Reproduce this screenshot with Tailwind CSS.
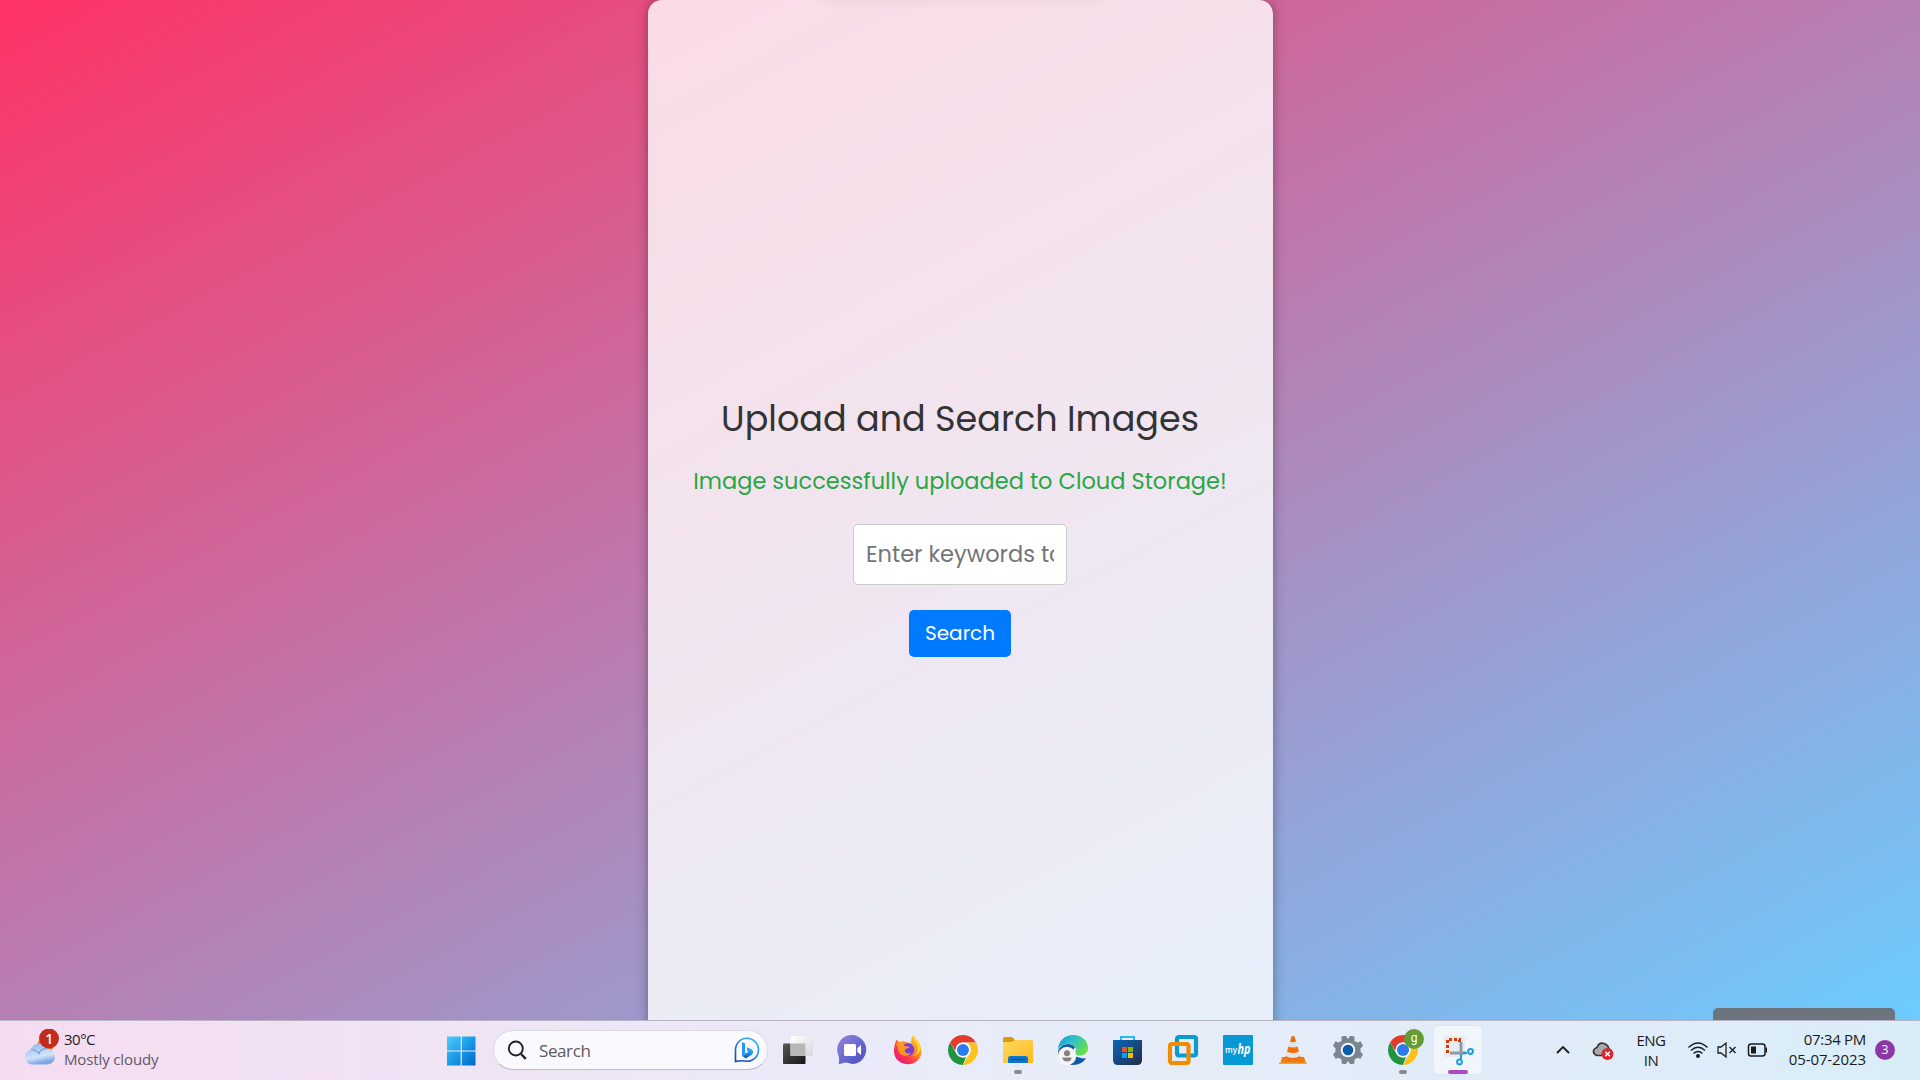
<!DOCTYPE html>
<html lang="en">
<head>
<meta charset="utf-8">
<title>Upload and Search Images</title>
<script src="https://cdn.jsdelivr.net/npm/@tailwindcss/browser@4"></script>
</head>
<body class="flex h-[1080px] w-[1920px] flex-col overflow-hidden font-['Poppins','Inter',sans-serif]">
<main class="relative flex h-[1020px] shrink-0 justify-center overflow-hidden bg-[linear-gradient(to_bottom_right,#ff3366,#6dcbff)]">
  <section class="ml-[1px] flex h-[1100px] w-[625px] flex-col items-center rounded-[14px] bg-white/80 pt-[392px] pr-[1px] shadow-[0_0_12px_rgba(0,0,0,0.35)] [font-feature-settings:'cv11']">
    <h1 class="whitespace-nowrap text-[35px] leading-[54px] text-[#333]">Upload and Search Images</h1>
    <p class="mt-[17px] whitespace-nowrap text-[22.5px] leading-[36px] text-[#28a745]">Image successfully uploaded to Cloud Storage!</p>
    <input type="text" placeholder="Enter keywords to search" class="mt-[25px] h-[61px] w-[214px] rounded-[5px] border border-[#ccc] bg-white px-[12px] pb-[2px] text-[22.5px] placeholder:text-[#757575]">
    <button class="mt-[25px] h-[47px] w-[102px] rounded-[5px] bg-[#007bff] pb-[2px] text-[20px] text-white">Search</button>
  </section>
  <div class="absolute -top-[10px] left-[820px] h-[10px] w-[280px] shadow-[0_0_12px_rgba(0,0,0,0.07)]"></div>
  <div class="absolute left-[1713px] top-[1008px] h-[30px] w-[182px] rounded-[5px] bg-[#6c757d]"></div>
</main>
<footer class="flex h-[60px] shrink-0 items-center border-t border-[#b9b5c5] bg-linear-to-r from-[#f5dcf1] via-[#e9ecf9] to-[#d9edf8] font-['Segoe_UI','Open_Sans',sans-serif] text-[15px]">
  <div class="ml-[24px] flex w-[422px] items-center pb-[4px]">
    <svg class="h-[40px] w-[40px]" viewBox="0 0 40 40"><defs><linearGradient id="cl" x1="0" y1="0" x2="0.3" y2="1"><stop stop-color="#8eb3ee"/><stop offset=".7" stop-color="#d3e4fa"/><stop offset="1" stop-color="#7ea5e6"/></linearGradient></defs><circle cx="21" cy="17" r="8" fill="#f47b20"/><path d="M8 35.500a7.500 7.500 0 0 1-1.500-14.800A9 9 0 0 1 23 19.500a8 8 0 0 1 0 16z" fill="url(#cl)"/><path d="M7 20.500c4 0 6 2 8 4 1-3 4-5 8-5" fill="none" stroke="#86a9e3" stroke-width="1.500"/><circle cx="25" cy="9.500" r="10" fill="#c42b1c"/><text x="25.300" y="14.500" text-anchor="middle" font-size="14" font-family="Open Sans" font-weight="600" fill="#fff">1</text></svg>
    <div class="whitespace-nowrap leading-[20px]"><div class="tracking-[-0.500px] text-[#1b1b1b]">30°C</div><div class="tracking-[-0.130px] text-[#5f5966]">Mostly cloudy</div></div>
  </div>
  <svg class="h-[30px] w-[30px]" viewBox="0 0 30 30"><defs><linearGradient id="w" x1="0" y1="0" x2="1" y2="1"><stop stop-color="#4cd0fb"/><stop offset=".5" stop-color="#1b9be8"/><stop offset="1" stop-color="#0067c9"/></linearGradient></defs><path d="M1 .500h13.600v13.900H1zM15.800.500h13.700v13.900H15.800zM1 15.600h13.600v13.900H1zM15.800 15.600h13.700v13.900H15.800z" fill="url(#w)"/></svg>
  <div class="ml-[17px] flex h-[40px] w-[275px] -translate-y-px items-center rounded-full border border-b-[#bcbac8] border-[#dcdae6] bg-[#faf9fd] px-[13px] text-[17px] text-[#5c5c60]">
    <svg class="h-[20px] w-[20px]" viewBox="0 0 20 20" fill="none" stroke="#222" stroke-width="1.900"><circle cx="8.800" cy="8.500" r="7"/><path d="m14 14 4.800 4.800" stroke-width="2.400"/></svg>
    <span class="ml-[12px] flex-1 translate-y-px tracking-[-0.400px]">Search</span>
    <svg class="-mr-[6px] h-[26px] w-[26px]" viewBox="0 0 26 26"><defs><linearGradient id="b" x1="1" y1="0" x2="0.200" y2="1"><stop stop-color="#38bde8"/><stop offset=".5" stop-color="#1f8df0"/><stop offset="1" stop-color="#1747b8"/></linearGradient></defs><path d="M1.500 24.500V13A11.500 11.500 0 1 1 13 24.300c-4-.8-7-.8-11.500.2z" fill="none" stroke="url(#b)" stroke-width="1.600"/><path d="M8 5.200 11 6.200v10.300L16 14l2.500 3L12 21.200 8 19z" fill="#249af0"/><path d="m12.500 10.200 4.500 1.800c3 1.500 2.500 4.500.5 5.800L12 21.200 9 19.500l6.500-4-1.800-.9z" fill="url(#b)"/></svg>
  </div>
  <div class="ml-[14px] flex -translate-y-px items-center gap-[23px]">
    <svg class="h-[32px] w-[32px]" viewBox="0 0 32 32"><defs><linearGradient id="tv" x1="0" y1="0" x2="1" y2="1"><stop stop-color="#555"/><stop offset="1" stop-color="#161616"/></linearGradient><linearGradient id="tw" x1="0" y1="0" x2="1" y2="1"><stop stop-color="#fff"/><stop offset="1" stop-color="#d8d8d8"/></linearGradient></defs><rect x="1" y="9.500" width="22.500" height="20.500" rx="1" fill="url(#tv)"/><rect x="8.500" y="2" width="22.500" height="20" rx="1" fill="url(#tw)"/><path d="M8.500 9.500h15V22h-15z" fill="#b8b8b8"/></svg>
    <svg class="h-[32px] w-[32px]" viewBox="0 0 32 32"><defs><linearGradient id="ch" x1="0" y1="0" x2="1" y2="1"><stop stop-color="#9b83d9"/><stop offset=".6" stop-color="#6265cf"/><stop offset="1" stop-color="#4b4cb8"/></linearGradient></defs><path d="M1.500 30c1-3 .6-5.500.2-8A14.500 14.500 0 1 1 16 30c-3 0-5-1.500-7-1.500-2.500 0-4 1.500-7.500 1.500z" fill="url(#ch)"/><rect x="7" y="10" width="12" height="12" rx="1.500" fill="#fff"/><path d="m20.300 14.200 3.700-3.200v10l-3.700-3.200z" fill="#fff"/></svg>
    <svg class="h-[32px] w-[32px]" viewBox="0 0 32 32"><defs><linearGradient id="ff" x1="1" y1="0" x2="0.200" y2="1"><stop stop-color="#ffe13c"/><stop offset=".45" stop-color="#ff8a28"/><stop offset=".75" stop-color="#fb3351"/><stop offset="1" stop-color="#e11a86"/></linearGradient></defs><path d="M4.500 5.500 8 9l5-1c2.500-.5 4 1 6 1 0-3 .5-5.500 2.500-8 1 4 5 5 6.500 10 4 9-1 19-12 19.200C5 30 0 21 2.500 12c.3-2 1-4 2-6.500z" fill="url(#ff)"/><circle cx="16" cy="15.500" r="6.200" fill="#7140da"/><path d="M4 10c3-3 8-3 9-2.500l-1.500 4 6.500 1.500c-2 2-4.500 1-5 3-.5 3 3 4.500 6 2.500-2 4.500-9 4.500-12 0-1.500-3 0-5-3-8.500z" fill="#ff9526"/><path d="M21 3c1 5 5 6 5 12-.5 4-3 6-5 7 6-1 9-6 7-12-2-4-4-3-5-8z" fill="#ffd82d"/></svg>
    <svg class="h-[32px] w-[32px]" viewBox="0 0 32 32"><path id="cr" d="M3 8.500A15 15 0 0 1 29 8.500H16a7.500 7.500 0 0 0-6.800 4.400L8.500 17z" fill="#e33b2e"/><path d="M3 8.500 9.500 19.700A7.500 7.500 0 0 0 19 22.900L15.800 31A15 15 0 0 1 3 8.500z" fill="#229342"/><path d="M29 8.500A15 15 0 0 1 15.800 31L22.500 19.700A7.500 7.500 0 0 0 19 8.500z" fill="#fcc31e"/><circle cx="16" cy="16" r="7.500" fill="#fff"/><circle cx="16" cy="16" r="6" fill="#2b7bec"/></svg>
    <div class="relative h-[32px] w-[32px]"><svg viewBox="0 0 32 32"><defs><linearGradient id="fo" x1="0" y1="0" x2="1" y2="1"><stop stop-color="#ffda62"/><stop offset="1" stop-color="#fbb91c"/></linearGradient></defs><path d="M1 4.500Q1 3 2.500 3H10l3 3v5H1z" fill="#dc9a07"/><path d="M1 8h9l3-2h16.500Q31 6 31 7.500V29H1z" fill="url(#fo)"/><path d="M6 29v-4.500Q6 22 8.500 22h15q2.500 0 2.500 2.500V29z" fill="#0d76ce"/><path d="M9 25.500h14" stroke="#084b8a" stroke-width="1.200"/></svg><i class="absolute left-[12px] top-[36px] h-[4px] w-[8px] rounded-full bg-[#8a8a90]"></i></div>
    <svg class="h-[32px] w-[32px]" viewBox="0 0 32 32"><defs><linearGradient id="ed" x1="0" y1="0" x2="1" y2=".6"><stop stop-color="#159bd8"/><stop offset=".5" stop-color="#31c2c7"/><stop offset="1" stop-color="#67df45"/></linearGradient></defs><path d="M1 19c0-9 13-12 17-6-3 4-2 9 2 10 4 1 7 2 9 1-2 4-7 7-13 7C7 31 1 26 1 19z" fill="#1259a8"/><path d="M1 16C1 7 8 1 16 1c9 0 15 6 15 13 0 5-4 7.500-8.500 7.500-5 0-4-2.500-3.500-5.500C19 12 14 9 9 10c-4 1-7 3-8 6z" fill="url(#ed)"/><circle cx="10" cy="22" r="9.200" fill="#f6f5f5"/><circle cx="10" cy="19.300" r="3" fill="#85817e"/><path d="M5.500 23.500h9q0 4-4.500 4t-4.500-4z" fill="#85817e"/></svg>
    <svg class="h-[32px] w-[32px]" viewBox="0 0 32 32"><defs><linearGradient id="st" x1="0" y1="0" x2="1" y2="1"><stop stop-color="#0a67ba"/><stop offset="1" stop-color="#242c49"/></linearGradient></defs><path d="M9 8V3h13v5" fill="none" stroke="#29b9ee" stroke-width="2"/><path d="M1 6h29v20q0 5-5 5H6q-5 0-5-5z" fill="url(#st)"/><path d="M10 13h5v5h-5z" fill="#f25022"/><path d="M16 13h5v5h-5z" fill="#7fba00"/><path d="M10 19h5v5h-5z" fill="#00a4ef"/><path d="M16 19h5v5h-5z" fill="#ffb900"/></svg>
    <svg class="h-[32px] w-[32px]" viewBox="0 0 32 32" fill="none" stroke-width="4.200"><rect x="10" y="3" width="19" height="18.500" rx="2" stroke="#0b9bd4"/><rect x="3" y="10" width="18.500" height="19" rx="2" stroke="#f38b00"/></svg>
    <svg class="h-[32px] w-[32px]" viewBox="0 0 32 32"><rect x="1" y="1" width="30" height="30" rx="1" fill="#0699d6"/><text x="3" y="19" font-family="Open Sans" font-size="8.500" font-weight="600" textLength="12" lengthAdjust="spacingAndGlyphs" fill="#fff">my</text><text x="15.500" y="20" font-family="Open Sans" font-size="15" font-style="italic" font-weight="700" textLength="13" lengthAdjust="spacingAndGlyphs" fill="#fff">hp</text></svg>
    <svg class="h-[32px] w-[32px]" viewBox="0 0 32 32"><path d="M5 23h22l2 6.500H3.500z" fill="#f07a0a"/><path d="M14.500 2.500q1.500-1.500 3 0L24 24q-8 5-16 0z" fill="#e4e4e2"/><path d="M14.500 2.500q1.500-1.500 3 0L19 7.500q-3 1.300-6 0zM11.500 12.500q4.500 2 9 0l1.500 5q-6 3-12 0zM8.600 22q7 4 14.800 0l.8 2.500q-8 4.500-16.400 0z" fill="#ed7010"/><path d="M2 28.500h28v1.500H2z" fill="#f5a02a"/></svg>
    <svg class="h-[32px] w-[32px]" viewBox="0 0 32 32"><path d="M11 2h3l1.500 2.500h1L18 2h3l1.500 1v4l3 1.500 3-1.200 2.500 4.500-2.500 2.500v3.400l2.500 2.500-2.500 4.500-3-1-3 1.800v3.500L21 30h-3l-1.500-2.500h-1L14 30h-3l-1.500-1v-3.500l-3-1.800-3 1L1 20.200l2.500-2.500v-3.400L1 11.800l2.500-4.500 3 1.200 3-1.500V3z" fill="#7b858f"/><circle cx="16" cy="16" r="7.300" fill="#f2f4f6"/><circle cx="16" cy="16" r="5.300" fill="#0b5cab"/></svg>
    <div class="relative h-[32px] w-[32px]"><svg viewBox="0 0 32 32"><use href="#cr"/><path d="M3 8.500 9.500 19.700A7.500 7.500 0 0 0 19 22.900L15.800 31A15 15 0 0 1 3 8.500z" fill="#229342"/><path d="M29 8.500A15 15 0 0 1 15.800 31L22.500 19.700A7.500 7.500 0 0 0 19 8.500z" fill="#fcc31e"/><circle cx="16" cy="16" r="7.500" fill="#fff"/><circle cx="16" cy="16" r="6" fill="#2b7bec"/></svg><span class="absolute left-[17px] -top-[5px] flex h-[20px] w-[20px] items-center justify-center rounded-full bg-[#649b35] pb-[2px] font-['Roboto',sans-serif] text-[12px] leading-none text-white">g</span><i class="absolute left-[12px] top-[36px] h-[4px] w-[8px] rounded-full bg-[#8a8a90]"></i></div>
    <div class="relative -ml-[8px] flex h-[48px] w-[48px] items-center justify-center rounded-[5px] bg-[#f0f6fc] shadow-[0_0_1px_1px_#dce6ef]"><svg class="h-[32px] w-[32px]" viewBox="0 0 32 32"><rect x="2" y="2" width="21" height="21" rx="2" fill="#e7eaee"/><path d="M17.500 8V5.500h-12v12H8" fill="none" stroke="#d83b01" stroke-width="3" stroke-dasharray="3 2"/><path d="M19 8v13M8 19h16" stroke="#9199a1" stroke-width="3"/><path d="M19 20v5M21 19h4" stroke="#1d9ee0" stroke-width="2"/><circle cx="17.500" cy="28" r="2.400" fill="none" stroke="#1d9ee0" stroke-width="2"/><circle cx="28.500" cy="17.500" r="2.400" fill="none" stroke="#1d9ee0" stroke-width="2"/></svg><i class="absolute bottom-0 left-[14px] h-[4px] w-[20px] rounded-full bg-[#ab4cc5]"></i></div>
  </div>
  <svg class="ml-[73px] h-[16px] w-[16px] -translate-y-px" viewBox="0 0 16 16"><path d="m2 11 6-6 6 6" fill="none" stroke="#1b1b1b" stroke-width="1.800"/></svg>
  <svg class="ml-[21px] h-[22px] w-[22px]" viewBox="0 0 22 22"><path d="M5 15.500Q1 14 1.500 10.500 2.500 8 5 7.500 7 2 12 3.500q3.500 1 4.500 4l2 4-8 4z" fill="#aaa" stroke="#333" stroke-width="1.600"/><circle cx="15.500" cy="14" r="6" fill="#dc2530"/><path d="m13.200 11.700 4.600 4.600m0-4.600-4.600 4.600" stroke="#fff" stroke-width="1.500"/></svg>
  <div class="ml-[19px] w-[36px] pb-[2px] text-center leading-[20px] tracking-[-0.500px] text-[#1b1b1b]">ENG<br>IN</div>
  <svg class="ml-[18px] h-[20px] w-[22px] -translate-y-px" viewBox="0 0 22 20" fill="none" stroke="#1b1b1b" stroke-width="1.400"><path d="M1.500 7.500Q11-1.500 20.500 7.500M4 10.500q7-6.500 14 0M6.500 13.500q4.500-4.200 9 0"/><circle cx="11" cy="16" r="1.300" fill="#1b1b1b"/></svg>
  <svg class="ml-[8px] h-[20px] w-[20px] -translate-y-px" viewBox="0 0 20 20" fill="none" stroke="#1b1b1b" stroke-width="1.300"><path d="M1 7h3l5-4v14l-5-4H1zM12.500 7l6 6m0-6-6 6"/></svg>
  <svg class="ml-[10px] h-[20px] w-[22px] -translate-y-px" viewBox="0 0 22 20"><rect x="1.500" y="4" width="16.500" height="12" rx="2.500" fill="none" stroke="#1b1b1b" stroke-width="1.500"/><path d="M4 6.500h5v7H4zM18.500 7.500h1.500v5h-1.500z" fill="#1b1b1b"/></svg>
  <div class="ml-[17px] w-[80px] whitespace-nowrap pb-[4px] text-right leading-[20px] text-[#1b1b1b]"><div class="tracking-[-0.300px]">07:34 PM</div><div class="tracking-[-0.100px]">05-07-2023</div></div>
  <div class="ml-[9px] flex h-[20px] w-[20px] -translate-y-px items-center justify-center rounded-full bg-[#8e38a8] text-[12px] text-white">3</div>
</footer>
</body>
</html>
